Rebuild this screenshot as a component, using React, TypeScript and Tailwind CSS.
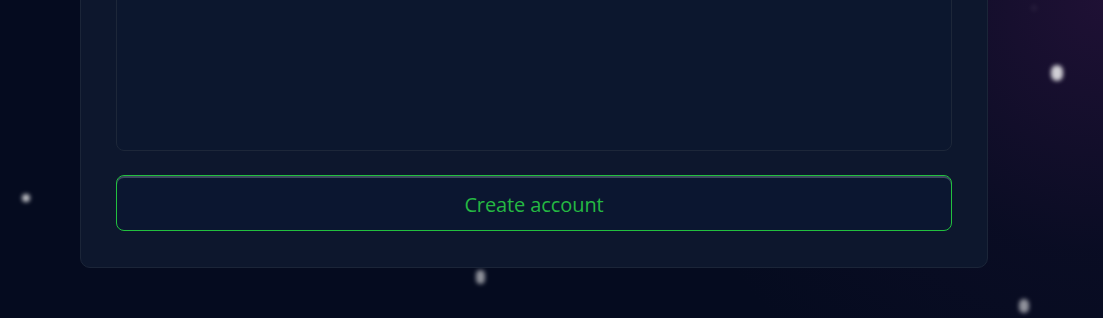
const stars = [
  { x: 1057, y: 73, w: 12, h: 16, o: 0.8 },
  { x: 26, y: 198, w: 8, h: 8, o: 0.75 },
  { x: 480, y: 277, w: 9, h: 14, o: 0.55 },
  { x: 1024, y: 306, w: 10, h: 14, o: 0.55 },
  { x: 1034, y: 8, w: 6, h: 6, o: 0.06 },
];

export default function App() {
  return (
    <div className="relative h-[318px] w-full overflow-hidden bg-[#050b1f] font-['Open_Sans',sans-serif]">
      <div className="pointer-events-none absolute inset-0 bg-[radial-gradient(circle_at_100%_0%,rgba(70,25,85,0.4),rgba(35,20,60,0.15)_22%,transparent_40%)]" />
      {stars.map((s, i) => (
        <div
          key={i}
          className="pointer-events-none absolute rounded-full bg-white blur-[2px]"
          style={{
            left: s.x - s.w / 2,
            top: s.y - s.h / 2,
            width: s.w,
            height: s.h,
            opacity: s.o,
          }}
        />
      ))}
      <div className="relative flex h-full flex-col justify-end pb-[50px] pl-[80px]">
        <div className="w-[908px] shrink-0 rounded-[10px] border border-[#1b2538] bg-[#0d172d] px-[35px] pb-[36px]">
          <div className="h-[320px] rounded-[8px] border border-[#1d2739] bg-[#0c172e]" />
          <button className="mt-6 flex h-[56px] w-full items-center justify-center rounded-[8px] border border-[#22c03f] bg-[#0b1630] pt-[3px] text-[20px] tracking-[-0.1px] text-[#25b843] shadow-[inset_0_2px_0_rgba(120,130,150,0.45)]">
            Create account
          </button>
        </div>
      </div>
    </div>
  );
}
